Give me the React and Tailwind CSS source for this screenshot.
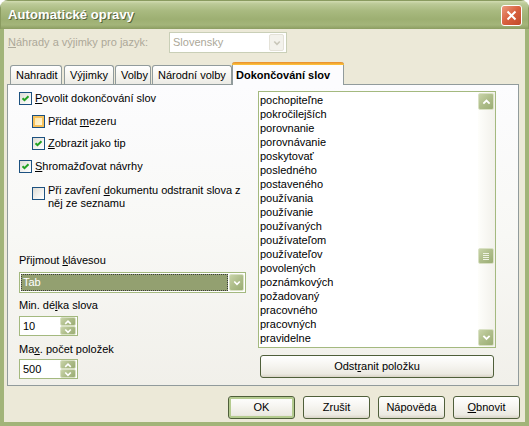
import React from "react";

const FONT = { fontFamily: '"Liberation Sans", Arial, sans-serif' };

function U({ children }) {
  return <span className="underline underline-offset-[1px] decoration-1">{children}</span>;
}

function Chevron({ dir = "down", color = "#fff", size = 9 }) {
  const pts = dir === "down" ? "2,3.5 4.5,6 7,3.5" : "2,6 4.5,3.5 7,6";
  return (
    <svg width={size} height={size} viewBox="0 0 9 9">
      <polyline points={pts} fill="none" stroke={color} strokeWidth="1.8" strokeLinecap="square" />
    </svg>
  );
}

function Check() {
  return (
    <svg width="11" height="11" viewBox="0 0 11 11" className="block">
      <polyline points="2.5,5.2 4.5,7.2 8.5,3.2" fill="none" stroke="#21A121" strokeWidth="2" />
    </svg>
  );
}

function Checkbox({ checked, hover }) {
  return (
    <div className="w-[13px] h-[13px] shrink-0 border border-[#1C5180] bg-[linear-gradient(135deg,#DCDBD5_0%,#F2F1EE_55%,#FFFFFF_100%)] flex items-center justify-center">
      {hover ? (
        <div className="w-[11px] h-[11px] border-2 border-[#F8C25C] bg-[linear-gradient(135deg,#FDE6A8,#FFF6DA)]" />
      ) : checked ? (
        <Check />
      ) : null}
    </div>
  );
}

function OliveBtn({ children, className = "" }) {
  return (
    <div className={"flex items-center justify-center rounded-[2px] border border-[#D9E1C4] bg-[linear-gradient(135deg,#C8D3A8_0%,#AEBD8A_50%,#9BAD74_100%)] " + className}>
      {children}
    </div>
  );
}

function XPButton({ children, isDefault, className = "" }) {
  return (
    <div
      className={
        "h-[23px] rounded-[3px] border border-[#4F5F3A] bg-[linear-gradient(to_bottom,#FFFFFF_0%,#F7F6F2_40%,#ECEAE2_85%,#D8D3C6_100%)] flex items-center justify-center text-[11px] text-black " +
        (isDefault ? "shadow-[inset_0_0_0_2px_#B4CB8F] " : "") +
        className
      }
    >
      {children}
    </div>
  );
}

function Spinner({ value }) {
  return (
    <div className="w-[59px] h-[20px] border border-[#A4B97F] bg-white flex items-center justify-between pl-[3px] pr-[1px]">
      <span className="text-[11px] leading-none">{value}</span>
      <div className="flex flex-col gap-0 w-[16px] h-[18px]">
        <OliveBtn className="h-[9px] w-[16px]">
          <Chevron dir="up" size={8} />
        </OliveBtn>
        <OliveBtn className="h-[9px] w-[16px]">
          <Chevron dir="down" size={8} />
        </OliveBtn>
      </div>
    </div>
  );
}

const WORDS = [
  "pochopiteľne",
  "pokročilejších",
  "porovnanie",
  "porovnávanie",
  "poskytovať",
  "posledného",
  "postaveného",
  "používania",
  "používanie",
  "používaných",
  "používateľom",
  "používateľov",
  "povolených",
  "poznámkových",
  "požadovaný",
  "pracovného",
  "pracovných",
  "pravidelne",
];

function Tab({ children, w, className = "" }) {
  return (
    <div
      className={
        "h-[19px] rounded-t-[3px] border border-b-0 border-[#919B9C] bg-[linear-gradient(to_bottom,#FFFFFF_0%,#F7F6F1_50%,#ECEBE5_100%)] flex items-center pl-[5px] text-[11px] " +
        w +
        " " +
        className
      }
    >
      {children}
    </div>
  );
}

export default function App() {
  return (
    <div className="w-[529px] h-[426px] bg-white text-black" style={FONT}>
      <div className="w-full h-full flex flex-col rounded-t-[8px] overflow-hidden">
        {/* Title bar */}
        <div className="h-[29px] shrink-0 flex items-center justify-between pl-[7px] pr-[6px] bg-[linear-gradient(to_bottom,#D2DCB2_0%,#BCCA98_10%,#A9BA80_35%,#9DAF72_65%,#A4B57A_85%,#8C9D62_100%)] border-x border-t border-[#8A9B60]">
          <span className="text-white font-bold text-[13px] [text-shadow:1px_1px_0_#55613A] tracking-[0.1px]">
            Automatické opravy
          </span>
          <div className="w-[21px] h-[21px] rounded-[3px] border border-white bg-[linear-gradient(135deg,#EB9A7E_0%,#D8603E_50%,#C24A2A_100%)] flex items-center justify-center">
            <svg width="11" height="11" viewBox="0 0 11 11">
              <path d="M1.5 1.5 L9.5 9.5 M9.5 1.5 L1.5 9.5" stroke="#fff" strokeWidth="2" />
            </svg>
          </div>
        </div>

        {/* Body */}
        <div className="flex-1 flex flex-col bg-[#ECE9D8] border-x-4 border-b-4 border-[#A2B479]">
          {/* language row */}
          <div className="mt-[3px] h-[21px] flex items-center">
            <div className="w-[165px] pl-[4px] text-[11px] text-[#ACA899]">
              <U>N</U>áhrady a výjimky pro jazyk:
            </div>
            <div className="w-[118px] h-[21px] border border-[#C9CFB7] bg-white flex items-center justify-between pl-[3px] pr-[2px]">
              <span className="text-[11px] text-[#ACA899]">Slovensky</span>
              <div className="w-[15px] h-[17px] rounded-[2px] border border-[#E4E2D8] bg-[#F3F2EC] flex items-center justify-center">
                <Chevron dir="down" color="#C9C7BA" size={8} />
              </div>
            </div>
          </div>

          {/* tabs */}
          <div className="mt-[9px] h-[22px] flex items-end pl-[6px]">
            <Tab w="w-[52px]">Nahradit</Tab>
            <Tab w="w-[50px]" className="ml-[2px]">Výjimky</Tab>
            <Tab w="w-[36px]" className="ml-[1px]">Volby</Tab>
            <Tab w="w-[80px]" className="ml-[1px]">Národní volby</Tab>
            <div className="relative z-10 -mb-[1px] w-[112px] h-[23px] rounded-t-[3px] border-x border-[#919B9C] bg-[#FCFCFE] flex flex-col">
              <div className="h-[3px] -mx-[1px] rounded-t-[3px] bg-[linear-gradient(to_bottom,#E68B2C,#FFC73C)]" />
              <div className="flex-1 flex items-center pl-[3px] text-[11px] font-bold">Dokončování slov</div>
            </div>
          </div>

          {/* panel */}
          <div className="ml-[3px] mr-[6px] h-[302px] border border-[#919B9C] bg-[linear-gradient(to_bottom,#FCFCFE_0%,#F8F8F5_50%,#F1F0EA_100%)] flex">
            {/* left column */}
            <div className="w-[250px] pl-[11px] flex flex-col text-[11px] leading-[13px]">
              <div className="mt-[7px] h-[13px] flex items-center gap-[3px]">
                <Checkbox checked />
                <span><U>P</U>ovolit dokončování slov</span>
              </div>
              <div className="mt-[10px] h-[13px] flex items-center gap-[3px] ml-[13px]">
                <Checkbox hover />
                <span>Přidat <U>m</U>ezeru</span>
              </div>
              <div className="mt-[9px] h-[13px] flex items-center gap-[3px] ml-[13px]">
                <Checkbox checked />
                <span><U>Z</U>obrazit jako tip</span>
              </div>
              <div className="mt-[10px] h-[13px] flex items-center gap-[3px]">
                <Checkbox checked />
                <span><U>S</U>hromažďovat návrhy</span>
              </div>
              <div className="mt-[11px] flex items-start gap-[3px] ml-[13px]">
                <div className="mt-[3px]">
                  <Checkbox />
                </div>
                <span>
                  Při zavření <U>d</U>okumentu odstranit slova z
                  <br />
                  něj ze seznamu
                </span>
              </div>

              <div className="mt-[44px]">
                Přijmout <U>k</U>lávesou
              </div>
              <div className="mt-[5px] w-[227px] h-[21px] border border-[#A4B97F] bg-white flex items-center pl-[1px] pr-[1px]">
                <div className="flex-1 h-[17px] bg-[#93A070] outline outline-1 outline-dotted outline-[#3C3C3C] -outline-offset-1 flex items-center pl-[2px] text-white">
                  Tab
                </div>
                <OliveBtn className="ml-[1px] w-[15px] h-[17px]">
                  <Chevron dir="down" size={8} />
                </OliveBtn>
              </div>

              <div className="mt-[6px]">
                Min. dé<U>l</U>ka slova
              </div>
              <div className="mt-[4px]">
                <Spinner value="10" />
              </div>

              <div className="mt-[7px]">
                Ma<U>x</U>. počet položek
              </div>
              <div className="mt-[3px]">
                <Spinner value="500" />
              </div>
            </div>

            {/* right column */}
            <div className="flex flex-col">
              <div className="mt-[6px] w-[238px] h-[257px] border border-[#A4B97F] bg-white flex">
                <div className="flex-1 pt-[1px] pl-[1px] flex flex-col text-[11px] leading-[14px]">
                  {WORDS.map((w) => (
                    <div key={w} className="h-[14px]">{w}</div>
                  ))}
                </div>
                <div className="w-[17px] flex flex-col py-[1px] bg-[linear-gradient(to_right,#FEFEFB,#F2F1EB)]">
                  <OliveBtn className="h-[17px] w-[16px]">
                    <Chevron dir="up" size={9} />
                  </OliveBtn>
                  <div className="h-[138px]" />
                  <OliveBtn className="h-[16px] w-[16px] flex-col gap-[1px]">
                    <div className="w-[6px] h-[1px] bg-[#EEF2E2]" />
                    <div className="w-[6px] h-[1px] bg-[#EEF2E2]" />
                    <div className="w-[6px] h-[1px] bg-[#EEF2E2]" />
                    <div className="w-[6px] h-[1px] bg-[#EEF2E2]" />
                  </OliveBtn>
                  <div className="flex-1" />
                  <OliveBtn className="h-[17px] w-[16px]">
                    <Chevron dir="down" size={9} />
                  </OliveBtn>
                </div>
              </div>
              <XPButton className="mt-[7px] ml-[2px] w-[234px] h-[22px]">
                <span>Odst<U>r</U>anit položku</span>
              </XPButton>
            </div>
          </div>

          {/* buttons */}
          <div className="mt-[10px] flex justify-end pr-[5px] gap-[8px]">
            <XPButton isDefault className="w-[67px]">OK</XPButton>
            <XPButton className="w-[67px]">Zrušit</XPButton>
            <XPButton className="w-[67px]">Nápověda</XPButton>
            <XPButton className="w-[67px]"><span><U>O</U>bnovit</span></XPButton>
          </div>
        </div>
      </div>
    </div>
  );
}
